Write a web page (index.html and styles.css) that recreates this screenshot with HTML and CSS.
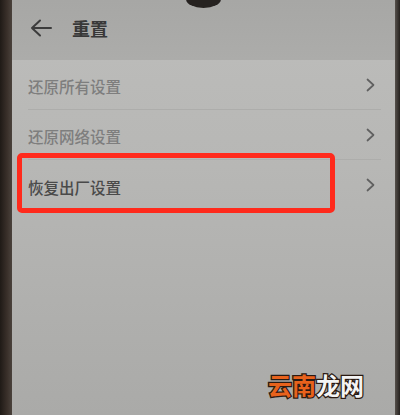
FILE: index.html
```html
<!DOCTYPE html>
<html lang="zh">
<head>
<meta charset="utf-8">
<link rel="stylesheet" href="styles.css">
</head>
<body>
<div class="phone">
  <div class="bezel-left"></div>
  <div class="screen">
    <div class="notch"></div>
    <header class="header">
      <svg class="back" width="22" height="18" viewBox="0 0 22 18"><path d="M10 1.5 L2 9 L10 16.5 M2 9 H21" fill="none" stroke="#3c3c3c" stroke-width="2" stroke-linecap="round" stroke-linejoin="round"/></svg>
      <span class="title">重置</span>
    </header>
    <div class="list">
      <div class="row">
        <span class="label faded">还原所有设置</span>
        <svg class="chev" width="9" height="14" viewBox="0 0 9 14"><path d="M1.5 1.5 L7.5 7 L1.5 12.5" fill="none" stroke="#606060" stroke-width="1.7" stroke-linecap="round" stroke-linejoin="round"/></svg>
      </div>
      <div class="row">
        <span class="label faded">还原网络设置</span>
        <svg class="chev" width="9" height="14" viewBox="0 0 9 14"><path d="M1.5 1.5 L7.5 7 L1.5 12.5" fill="none" stroke="#606060" stroke-width="1.7" stroke-linecap="round" stroke-linejoin="round"/></svg>
      </div>
      <div class="row last">
        <span class="label">恢复出厂设置</span>
        <svg class="chev" width="9" height="14" viewBox="0 0 9 14"><path d="M1.5 1.5 L7.5 7 L1.5 12.5" fill="none" stroke="#606060" stroke-width="1.7" stroke-linecap="round" stroke-linejoin="round"/></svg>
      </div>
    </div>
    <div class="highlight"></div>
    <div class="watermark"><span class="wm-orange">云南</span><span class="wm-white">龙网</span></div>
  </div>
  <div class="bezel-right"></div>
</div>
</body>
</html>
```
FILE: styles.css
```css
html, body {
  margin: 0;
  padding: 0;
}
body {
  width: 400px;
  height: 415px;
  overflow: hidden;
  font-family: "Noto Sans CJK SC", "Noto Sans", sans-serif;
  background: #2a2521;
}
.phone {
  display: flex;
  width: 400px;
  height: 415px;
}
.bezel-left {
  width: 12px;
  background: linear-gradient(90deg, #1f1a16 0%, #3a302a 60%, #4a423c 100%);
}
.bezel-right {
  width: 5px;
  background: linear-gradient(90deg, #55504b 0%, #25211e 100%);
}
.screen {
  position: relative;
  flex: 1;
  display: flex;
  flex-direction: column;
  background: linear-gradient(180deg, #bdbdbb 0%, #b7b7b5 40%, #aaaaa8 100%);
  overflow: hidden;
}
.notch {
  position: absolute;
  left: 174px;
  top: -10px;
  width: 35px;
  height: 18px;
  border-radius: 50%;
  background: #262220;
}
.header {
  height: 60px;
  background: linear-gradient(180deg, #a7a7a5 0%, #acacaa 100%);
  display: flex;
  align-items: center;
  padding: 0 0 4px 18px;
  box-sizing: border-box;
}
.back {
  display: block;
}
.title {
  margin-left: 20px;
  font-size: 18px;
  font-weight: 700;
  color: #383838;
}
.list {
  display: flex;
  flex-direction: column;
  padding: 0 14px 0 16px;
}
.row {
  height: 49px;
  display: flex;
  align-items: center;
  justify-content: space-between;
  border-bottom: 1px solid #adadab;
  padding-right: 6px;
}
.row.last {
  border-bottom: none;
  height: 50px;
}
.label {
  font-size: 15.5px;
  font-weight: 500;
  color: #4a4a4a;
  padding-top: 3px;
}
.label.faded {
  color: #7e7e7e;
}
.chev {
  display: block;
}
.highlight {
  position: absolute;
  left: 5px;
  top: 153px;
  width: 308px;
  height: 50px;
  border: 5px solid #ff2a1c;
  border-radius: 5px;
}
.watermark {
  position: absolute;
  left: 256px;
  top: 370px;
  font-size: 24px;
  font-weight: 700;
  line-height: 30px;
}
.watermark span {
  -webkit-text-stroke: 2.5px #2a1a12;
  paint-order: stroke fill;
}
.wm-orange {
  color: #e8621c;
}
.wm-white {
  color: #f4f4f4;
}
```
